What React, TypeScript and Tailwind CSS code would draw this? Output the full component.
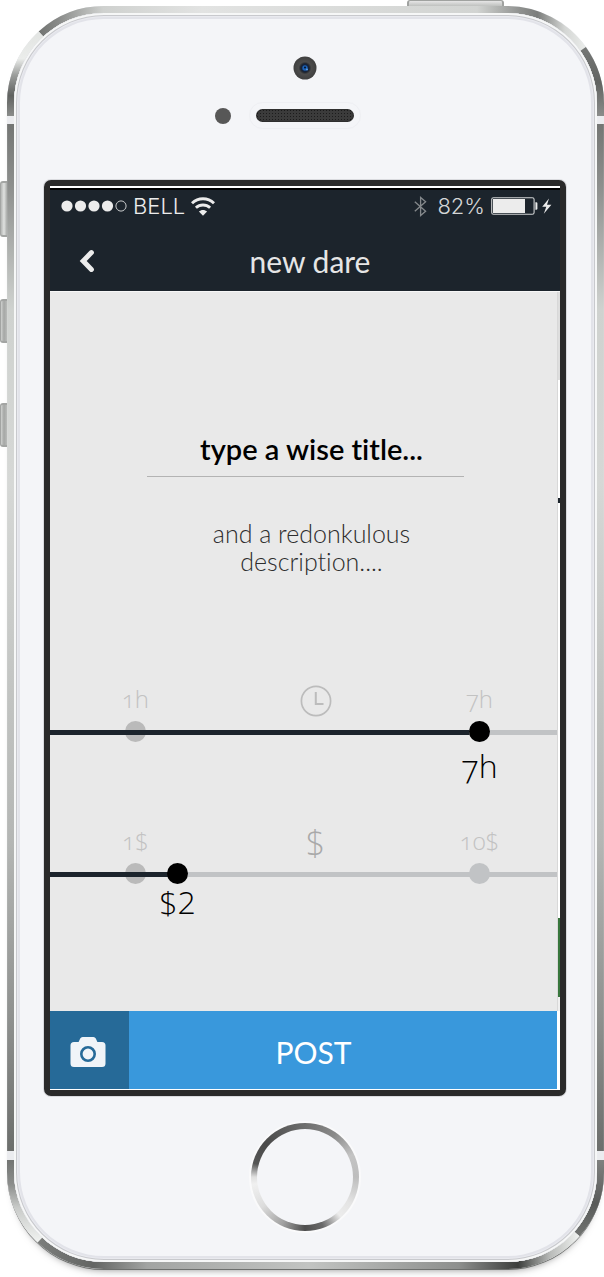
import { useState } from "react";

function PhoneRim() {
  return (
    <svg
      className="pointer-events-none absolute inset-0 h-full w-full"
      viewBox="0 0 597 1262"
      preserveAspectRatio="none"
      fill="none"
      strokeWidth="7"
      aria-hidden="true"
    >
      <defs>
        <linearGradient id="rimTop" gradientUnits="userSpaceOnUse" x1="30" y1="0" x2="580" y2="0">
          <stop offset="0" stopColor="#6f716f" />
          <stop offset="0.04" stopColor="#8a8c8a" />
          <stop offset="0.12" stopColor="#cfd1cf" />
          <stop offset="0.3" stopColor="#e2e3e2" />
          <stop offset="0.8" stopColor="#d2d4d2" />
          <stop offset="0.88" stopColor="#8e908e" />
          <stop offset="0.91" stopColor="#7c7e7c" />
          <stop offset="0.96" stopColor="#d5d7d5" />
          <stop offset="1" stopColor="#eceeec" />
        </linearGradient>
        <linearGradient id="rimTopLeft" gradientUnits="userSpaceOnUse" x1="0" y1="28" x2="0" y2="110">
          <stop offset="0" stopColor="#e3e5e3" />
          <stop offset="0.3" stopColor="#ebedeb" />
          <stop offset="0.5" stopColor="#9c9e9c" />
          <stop offset="0.75" stopColor="#606260" />
          <stop offset="1" stopColor="#8b8d8b" />
        </linearGradient>
        <linearGradient id="rimTopRight" gradientUnits="userSpaceOnUse" x1="0" y1="43" x2="0" y2="110">
          <stop offset="0" stopColor="#747674" />
          <stop offset="0.5" stopColor="#626462" />
          <stop offset="1" stopColor="#8b8d8b" />
        </linearGradient>
        <linearGradient id="rimSide" gradientUnits="userSpaceOnUse" x1="0" y1="118" x2="0" y2="1144">
          <stop offset="0" stopColor="#747674" />
          <stop offset="0.06" stopColor="#8d8f8d" />
          <stop offset="0.18" stopColor="#cfd2cf" />
          <stop offset="0.35" stopColor="#d6d8d6" />
          <stop offset="0.7" stopColor="#b4b6b4" />
          <stop offset="0.87" stopColor="#8f918f" />
          <stop offset="1" stopColor="#6c6e6c" />
        </linearGradient>
        <linearGradient id="rimBottomLeft" gradientUnits="userSpaceOnUse" x1="0" y1="1153" x2="0" y2="1233">
          <stop offset="0" stopColor="#737573" />
          <stop offset="0.3" stopColor="#8b8d8b" />
          <stop offset="0.6" stopColor="#c9cbc9" />
          <stop offset="1" stopColor="#eef0ee" />
        </linearGradient>
        <linearGradient id="rimBottomRight" gradientUnits="userSpaceOnUse" x1="0" y1="1153" x2="0" y2="1226">
          <stop offset="0" stopColor="#7f817f" />
          <stop offset="0.6" stopColor="#5a5c5a" />
          <stop offset="1" stopColor="#6f716f" />
        </linearGradient>
        <linearGradient id="rimBottom" gradientUnits="userSpaceOnUse" x1="33" y1="0" x2="570" y2="0">
          <stop offset="0" stopColor="#7b7d7b" />
          <stop offset="0.1" stopColor="#636563" />
          <stop offset="0.2" stopColor="#a2a4a2" />
          <stop offset="0.5" stopColor="#c2c4c2" />
          <stop offset="0.78" stopColor="#8d8f8d" />
          <stop offset="0.89" stopColor="#3c3e3c" />
          <stop offset="0.95" stopColor="#b9bbb9" />
          <stop offset="1" stopColor="#eceeec" />
        </linearGradient>
      </defs>
      <path d="M34 28A93.5 93.5 0 0 1 97 3.5H500A93.5 93.5 0 0 1 576 43" stroke="url(#rimTop)" />
      <path d="M34 28A93.5 93.5 0 0 0 3.5 97V110" stroke="url(#rimTopLeft)" />
      <path d="M576 43A93.5 93.5 0 0 1 593.5 97V110" stroke="url(#rimTopRight)" />
      <path d="M3.6 118V1144" stroke="url(#rimSide)" />
      <path d="M593.4 118V1144" stroke="url(#rimSide)" />
      <path d="M3.5 1153V1165A93.5 93.5 0 0 0 33 1233" stroke="url(#rimBottomLeft)" />
      <path d="M593.5 1153V1165A93.5 93.5 0 0 1 570 1227" stroke="url(#rimBottomRight)" />
      <path d="M33 1233A93.5 93.5 0 0 0 97 1258.5H500A93.5 93.5 0 0 0 570 1227" stroke="url(#rimBottom)" />
    </svg>
  );
}

function SideButtons() {
  return (
    <div aria-hidden="true">
      <span className="absolute top-[175px] -left-[7px] h-[56px] w-[7px] rounded-l-[3px] border-y-2 border-l border-[#a3a5a3] bg-gradient-to-r from-[#b5b7b5] via-[#e0e2e0] to-[#a9aba9]" />
      <span className="absolute top-[293px] -left-[7px] h-[44px] w-[7px] rounded-l-[3px] border-y-2 border-l border-[#a3a5a3] bg-gradient-to-r from-[#cfd1cf] via-[#a5a7a5] to-[#b9bbb9]" />
      <span className="absolute top-[397px] -left-[7px] h-[44px] w-[7px] rounded-l-[3px] border-y-2 border-l border-[#a3a5a3] bg-gradient-to-r from-[#cfd1cf] via-[#a5a7a5] to-[#b9bbb9]" />
      <span className="absolute -top-[6px] right-[100px] h-[6px] w-[97px] rounded-t-[3px] border-x-2 border-t border-[#a0a2a0] bg-gradient-to-b from-[#e6e6e6] to-[#bfc1bf]" />
    </div>
  );
}

function SignalDots() {
  return (
    <svg width="66" height="12" viewBox="0 0 66 12" fill="#ececec" aria-hidden="true">
      <circle cx="6" cy="6" r="5.6" />
      <circle cx="19.5" cy="6" r="5.6" />
      <circle cx="33" cy="6" r="5.6" />
      <circle cx="46.5" cy="6" r="5.6" />
      <circle cx="60" cy="6" r="5.1" fill="none" stroke="#c9cbcc" />
    </svg>
  );
}

function WifiIcon() {
  return (
    <svg width="24" height="19" viewBox="0 0 24 19" fill="none" stroke="#ececec" strokeWidth="2.9" aria-hidden="true">
      <path d="M1 6.2C7.2 0.2 16.8 0.2 23 6.2" />
      <path d="M4.9 10.8C9 7 15 7 19.1 10.8" />
      <path d="M12 18.8L7.9 14.6C10.2 12.4 13.8 12.4 16.1 14.6Z" fill="#ececec" stroke="none" />
    </svg>
  );
}

function BluetoothIcon() {
  return (
    <svg width="13" height="21" viewBox="0 0 13 20" fill="none" stroke="#85898c" strokeWidth="1.3" aria-hidden="true">
      <path d="M0.8 5.2L11.6 14.8L6.6 19V1L11.6 5.2L0.8 14.8" />
    </svg>
  );
}

function BatteryIcon() {
  return (
    <svg width="61" height="18" viewBox="0 0 61 18" aria-hidden="true">
      <rect x="0.7" y="0.7" width="42.4" height="16.6" rx="1.8" fill="none" stroke="#cfd1d2" strokeWidth="1.1" />
      <rect x="2" y="2" width="32" height="14" fill="#ececec" />
      <path d="M44.4 5.2H45.3Q46.4 5.2 46.4 6.4V11.6Q46.4 12.8 45.3 12.8H44.4Z" fill="#ececec" />
      <path d="M58 1.5L51.2 9.8H55.3L52.8 16.8L60.4 7.8H56Z" fill="#ececec" />
    </svg>
  );
}

function ClockIcon() {
  return (
    <svg width="32" height="32" viewBox="0 0 32 32" fill="none" stroke="#bcbcbc" aria-hidden="true">
      <circle cx="16" cy="16" r="14.6" strokeWidth="1.7" />
      <path d="M15.8 7V19H23.5" strokeWidth="2" />
    </svg>
  );
}

type DareSliderProps = {
  label: string;
  min: number;
  max: number;
  initial: number;
  minLabel: string;
  maxLabel: string;
  icon: React.ReactNode;
  format: (value: number) => string;
  outputClass: string;
};

function DareSlider({ label, min, max, initial, minLabel, maxLabel, icon, format, outputClass }: DareSliderProps) {
  const [value, setValue] = useState(initial);
  const fraction = (value - min) / (max - min);

  return (
    <div>
      <div className="flex h-8 items-start justify-between pr-[47px] pl-[55px] text-[24px] leading-7 font-light text-[#c2c2c2] oldstyle-nums">
        <span className="w-[61px] text-center">{minLabel}</span>
        <span className="flex w-[61px] translate-x-2 justify-center">{icon}</span>
        <span className="w-[61px] text-center">{maxLabel}</span>
      </div>
      <div className="relative mt-1 h-[21px]">
        <div className="absolute inset-x-0 top-[9px] h-[5px] bg-[#c1c3c5]" />
        <span className="absolute left-[75px] size-[21px] rounded-full bg-[#bababa]" />
        <div
          className="absolute top-[9px] left-0 h-[5px] bg-[#1c242c]"
          style={{ width: `calc(86px + (100% - 163px) * ${fraction})` }}
        />
        <span className="absolute right-[67px] size-[21px] rounded-full bg-[#c1c3c5]" />
        <div className="relative pr-[67px] pl-[75px]">
          <input
            type="range"
            aria-label={label}
            min={min}
            max={max}
            step="0.1"
            value={value}
            onChange={(event) => setValue(Number(event.target.value))}
            className="block h-[21px] w-full cursor-pointer appearance-none bg-transparent [&::-moz-range-thumb]:size-[21px] [&::-moz-range-thumb]:rounded-full [&::-moz-range-thumb]:border-0 [&::-moz-range-thumb]:bg-black [&::-webkit-slider-thumb]:size-[21px] [&::-webkit-slider-thumb]:appearance-none [&::-webkit-slider-thumb]:rounded-full [&::-webkit-slider-thumb]:bg-black"
          />
        </div>
      </div>
      <div className={outputClass}>
        <output
          className="block w-[61px] text-center text-[32px] leading-9 font-light text-black"
          style={{ marginLeft: `calc(55px + (100% - 163px) * ${fraction})` }}
        >
          {format(value)}
        </output>
      </div>
    </div>
  );
}

function NextPageEdge() {
  return (
    <div className="flex w-[3px] shrink-0 flex-col border-l border-[#d8d8d8]" aria-hidden="true">
      <span className="grow-[88] bg-[#dedede]" />
      <span className="grow-[118] bg-white" />
      <span className="h-[5px] bg-[#1c242c]" />
      <span className="grow-[416] bg-white" />
      <span className="h-[79px] bg-[#38763c]" />
      <span className="h-[14px] bg-[#efefef]" />
    </div>
  );
}

export default function App() {
  return (
    <div className="overflow-hidden bg-white pt-[6px] pb-[9px] pl-[7px] font-['Lato',sans-serif] [font-variant-ligatures:none]">
      <div className="relative rounded-[97px] bg-[#ebecef] p-[7px] shadow-[0_1px_0_#6d6f6d,0_7px_8px_-7px_rgba(0,0,0,0.55)]">
        <SideButtons />
        <PhoneRim />
        <div className="relative rounded-[90px] bg-[#f4f5f8] pr-[31px] pl-[30px] shadow-[inset_0_0_0_2px_#f6f7f7,inset_0_0_0_3px_#c8c9cd,inset_0_0_0_4px_#e9eaef,inset_0_0_0_6px_#e2e3e9]">
          <div className="flex h-[167px] flex-col items-center pt-[43px]" aria-hidden="true">
            <svg width="24" height="24" viewBox="0 0 24 24">
              <defs>
                <radialGradient id="lens">
                  <stop offset="0" stopColor="#1a2436" />
                  <stop offset="0.4" stopColor="#2a2c30" />
                  <stop offset="0.55" stopColor="#4c4c4c" />
                  <stop offset="1" stopColor="#3f3f3f" />
                </radialGradient>
              </defs>
              <circle cx="12" cy="12" r="11.5" fill="url(#lens)" />
              <circle cx="12" cy="12" r="4.4" fill="#16233a" />
              <circle cx="12" cy="12" r="2.7" fill="#1c62b8" />
              <circle cx="12" cy="11.6" r="1" fill="#07101f" />
              <circle cx="14" cy="13.6" r="1" fill="#5aa0e8" />
            </svg>
            <div className="mt-[22px] flex items-center gap-[18px]">
              <span className="size-4 rounded-full bg-[#575757]" />
              <span className="rounded-full border border-[#eeeff3] p-[6px]">
                <span className="block h-[13px] w-[98px] rounded-full bg-[#3b3b3b] bg-[radial-gradient(#1c1c1c_1px,transparent_1px)] bg-[size:3px_3px] shadow-[inset_0_0_2px_#111]" />
              </span>
              <span className="size-4" />
            </div>
          </div>

          <main className="rounded-[7px] border-[6px] border-[#2a2a2a] bg-black shadow-[0_0_0_1px_#d9dade]">
            <div className="h-1 border-b-2 border-black bg-white" />
            <header className="bg-[#1c242c] text-[#ececec]">
              <div className="flex h-[32px] items-center justify-between pr-[8px] pl-[11px] font-['Inter',sans-serif] text-[22px] leading-6 font-light">
                <div className="flex items-center gap-[6px]">
                  <SignalDots />
                  <span>BELL</span>
                  <WifiIcon />
                </div>
                <div className="flex items-center gap-[6px]">
                  <BluetoothIcon />
                  <span className="pl-1 text-[#d4d6d7]">82%</span>
                  <BatteryIcon />
                </div>
              </div>
              <div className="flex h-[69px] items-center pt-2">
                <button type="button" aria-label="Back" className="flex h-10 w-[74px] items-center justify-center">
                  <svg width="16" height="24" viewBox="0 0 16 24" fill="none" stroke="#ececec" strokeWidth="5" strokeLinecap="round" strokeLinejoin="miter" aria-hidden="true">
                    <path d="M12.4 3.6L4.2 12L12.4 20.4" />
                  </svg>
                </button>
                <h1 className="grow pr-[64px] text-center text-[30px] leading-9 text-[#e6e6e6]">new dare</h1>
              </div>
            </header>

            <form onSubmit={(event) => event.preventDefault()}>
              <div className="flex border-t border-[#f7f7f7] bg-white">
                <div className="min-w-0 grow bg-[#e9e9e9]">
                  <div className="pt-[136px] pl-1">
                    <div className="mx-auto w-[317px]">
                      <input
                        type="text"
                        aria-label="Title"
                        placeholder="type a wise title..."
                        className="block h-[49px] w-full border-b border-[#b3b3b3] bg-transparent pb-2 pl-3 text-center text-[29px] font-semibold text-black outline-none placeholder:text-black placeholder:opacity-100"
                      />
                      <textarea
                        aria-label="Description"
                        rows={2}
                        placeholder="and a redonkulous description...."
                        className="mt-[42px] block h-[56px] w-full resize-none overflow-hidden bg-transparent pr-[38px] pl-[50px] text-center text-[25px] leading-7 font-light text-[#2d2d2d] outline-none placeholder:text-[#2d2d2d] placeholder:opacity-100"
                      />
                    </div>
                  </div>

                  <div className="flex flex-col gap-[43px] pt-[110px] pb-[91px] font-['Open_Sans',sans-serif]">
                    <DareSlider
                      label="Time limit"
                      min={1}
                      max={7}
                      initial={7}
                      minLabel="1h"
                      maxLabel="7h"
                      icon={<ClockIcon />}
                      format={(value) => `${Math.floor(value)}h`}
                      outputClass="pt-[6px] oldstyle-nums"
                    />
                    <DareSlider
                      label="Amount"
                      min={1}
                      max={10}
                      initial={2.1}
                      minLabel="1$"
                      maxLabel="10$"
                      icon={<span className="text-[34px] leading-8 text-[#a9a9a9]">$</span>}
                      format={(value) => `$${Math.floor(value)}`}
                      outputClass="lining-nums"
                    />
                  </div>
                </div>
                <NextPageEdge />
              </div>

              <div className="flex h-[78px] bg-white pr-[3px]">
                <button type="button" aria-label="Add a photo" className="flex w-[79px] shrink-0 items-center justify-center bg-[#266a98]">
                  <svg width="36" height="32" viewBox="0 0 36 32" className="mt-1 mr-1" aria-hidden="true">
                    <path
                      d="M4 6H8.6L10.2 2.6Q10.9 1 12.6 1H23.4Q25.1 1 25.8 2.6L27.4 6H32Q35.5 6 35.5 9.5V27.5Q35.5 31 32 31H4Q0.5 31 0.5 27.5V9.5Q0.5 6 4 6Z"
                      fill="#f0f4f8"
                    />
                    <circle cx="18" cy="18" r="6.7" fill="none" stroke="#266a98" strokeWidth="2.6" />
                  </svg>
                </button>
                <button type="submit" className="grow bg-[#3998dc] pt-1 pr-[59px] text-[30px] leading-9 text-white">
                  POST
                </button>
              </div>
            </form>
            <div className="h-px bg-white" />
          </main>

          <div className="flex h-[166px] justify-center pt-[27px]">
            <button
              type="button"
              aria-label="Home"
              className="size-[108px] rounded-full bg-[conic-gradient(#6e6e6e_0deg,#8a8a8a_35deg,#c4c4c4_65deg,#bdbdbd_90deg,#e4e4e4_120deg,#ececec_138deg,#6a6a6a_160deg,#4e4e4e_180deg,#a0a0a0_205deg,#dcdcdc_235deg,#f0f0f0_262deg,#e0e0e0_270deg,#565656_285deg,#4a4a4a_310deg,#6e6e6e_360deg)] p-[6px] shadow-[0_0_0_2px_#fafafb]"
            >
              <span className="block size-full rounded-full bg-[#f4f5f8]" />
            </button>
          </div>
        </div>
      </div>
    </div>
  );
}
